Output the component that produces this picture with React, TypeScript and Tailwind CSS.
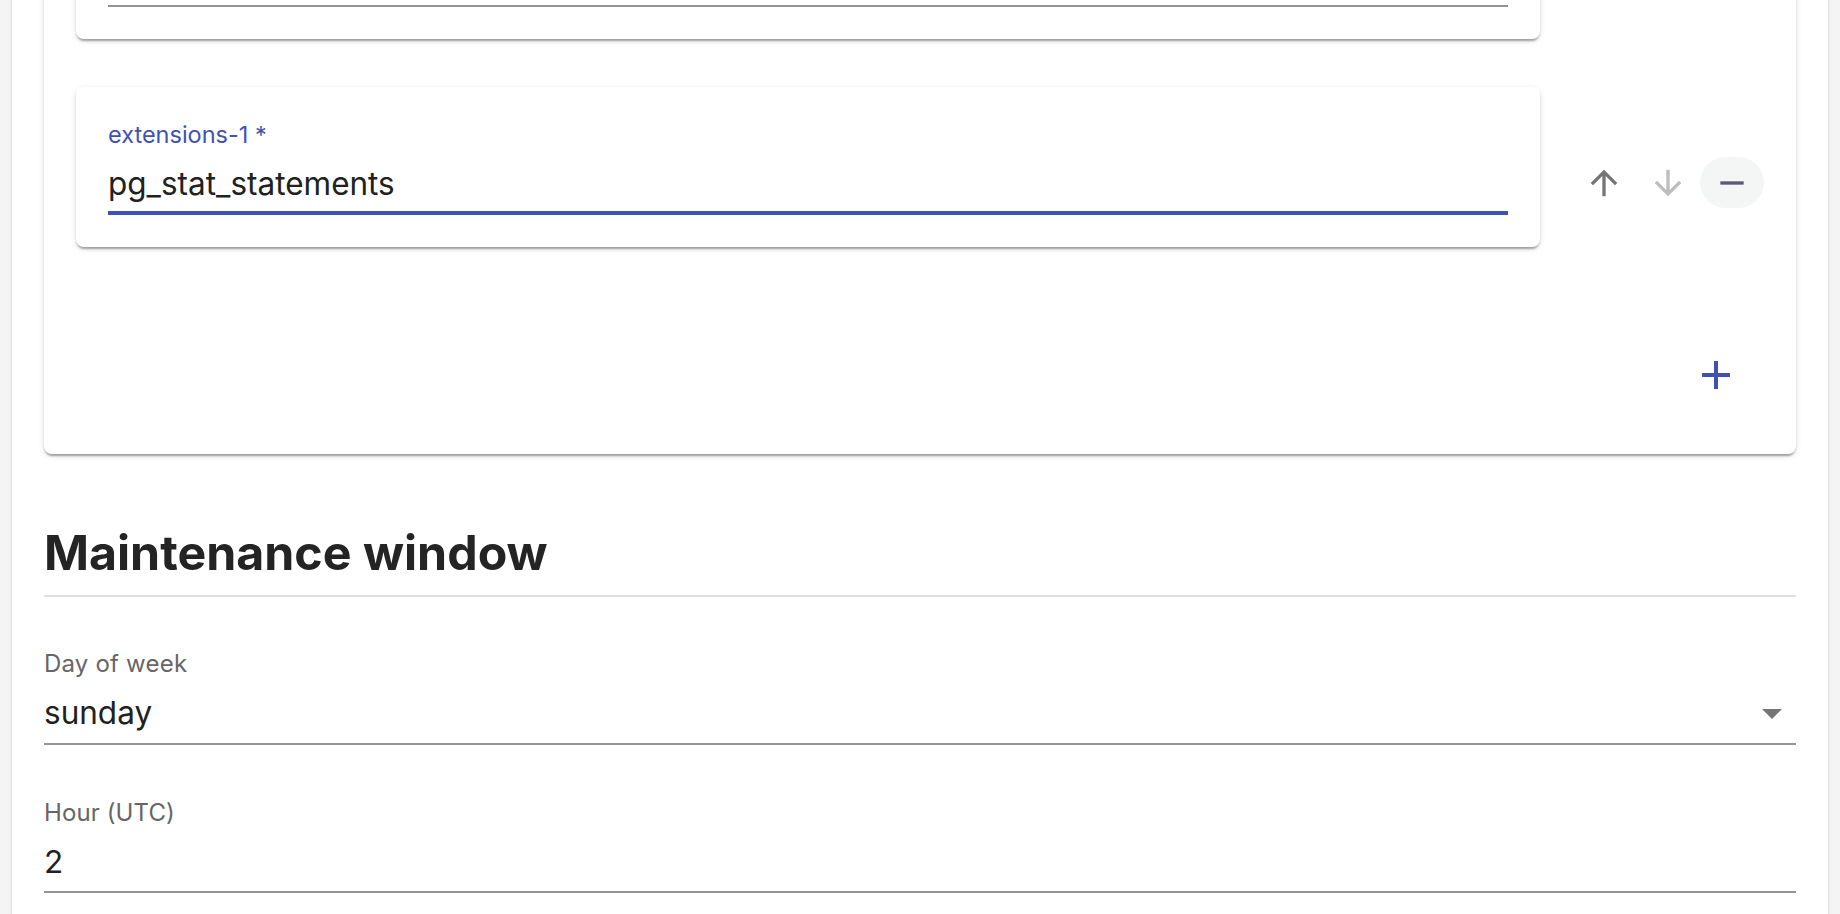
import React from "react";

const ArrowUp = ({ color }: { color: string }) => (
  <svg width="40" height="40" viewBox="0 0 24 24" fill={color}>
    <path d="M4 12l1.41 1.41L11 7.83V20h2V7.83l5.58 5.59L20 12l-8-8-8 8z" />
  </svg>
);

const ArrowDown = ({ color }: { color: string }) => (
  <svg width="40" height="40" viewBox="0 0 24 24" fill={color}>
    <path d="M20 12l-1.41-1.41L13 16.17V4h-2v12.17l-5.58-5.59L4 12l8 8 8-8z" />
  </svg>
);

const Minus = ({ color }: { color: string }) => (
  <svg width="40" height="40" viewBox="0 0 24 24" fill={color}>
    <path d="M19 13H5v-2h14v2z" />
  </svg>
);

const Plus = () => (
  <svg width="48" height="48" viewBox="0 0 24 24" fill="#3f51b5">
    <path d="M19 13h-6v6h-2v-6H5v-2h6V5h2v6h6v2z" />
  </svg>
);

const cardShadow =
  "shadow-[0_4px_2px_-2px_rgba(0,0,0,0.2),0_2px_2px_0_rgba(0,0,0,0.14),0_2px_6px_0_rgba(0,0,0,0.12)]";

function ItemRow({
  label,
  value,
  focused,
  upDisabled,
  downDisabled,
}: {
  label?: string;
  value?: string;
  focused: boolean;
  upDisabled: boolean;
  downDisabled: boolean;
}) {
  return (
    <div className="flex items-start gap-[32px]">
      <div
        className={`flex-1 bg-white rounded-lg px-[32px] pt-[36px] pb-[32px] ${cardShadow}`}
      >
        <div
          className={`h-[24px] text-[23.5px] leading-[24px] ${
            focused ? "text-[#3f51b5]" : "text-[#666666]"
          }`}
        >
          {label}
        </div>
        <div
          className={`mt-[18px] ${
            focused
              ? "pb-[8px] border-b-4 border-[#3f51b5]"
              : "pb-[10px] border-b-2 border-[#949494]"
          }`}
        >
          <div className="h-[38px] text-[31.5px] leading-[38px] text-[#212121]">{value}</div>
        </div>
      </div>
      <div className="mt-[70px] flex">
        <div className="w-[64px] h-[51px] flex items-center justify-center rounded-full">
          <ArrowUp color={upDisabled ? "#bdbdbd" : "#757575"} />
        </div>
        <div className="w-[64px] h-[51px] flex items-center justify-center rounded-full">
          <ArrowDown color={downDisabled ? "#bdbdbd" : "#757575"} />
        </div>
        <div
          className={`w-[64px] h-[51px] flex items-center justify-center rounded-full ${
            focused ? "bg-[#f4f5f5]" : ""
          }`}
        >
          <Minus color={focused ? "#575b77" : "#757575"} />
        </div>
      </div>
    </div>
  );
}

export default function App() {
  return (
    <div className="w-[1840px] h-[914px] overflow-hidden bg-[#f4f4f4] px-[12px] font-['Inter',sans-serif]">
      <div className="min-h-[1200px] bg-white px-[32px] pb-[200px] shadow-[0_0_3px_rgba(0,0,0,0.18)]">
        <div className={`-mt-[153px] bg-white rounded-lg px-[32px] pt-[32px] pb-[55px] ${cardShadow}`}>
          <div className="flex flex-col gap-[48px]">
            <ItemRow focused={false} upDisabled={true} downDisabled={false} />
            <ItemRow
              label="extensions-1 *"
              value="pg_stat_statements"
              focused={true}
              upDisabled={false}
              downDisabled={true}
            />
          </div>
          <div className="mt-[104px] flex justify-end pr-[24px]">
            <Plus />
          </div>
        </div>

        <h2 className="mt-[70px] text-[48.3px] leading-[58px] font-bold text-[#242424]">
          Maintenance window
        </h2>
        <div className="mt-[13px] h-[2px] bg-[#e0e0e0]" />

        <div className="mt-[55px] text-[24px] leading-[24px] tracking-[0.2px] text-[#666666]">
          Day of week
        </div>
        <div className="mt-[18px] pb-[11px] border-b-2 border-[#949494] flex items-start">
          <div className="flex-1 text-[31.5px] leading-[38px] text-[#212121]">sunday</div>
          <svg
            className="mt-[15px] mr-[14px]"
            width="20"
            height="10"
            viewBox="0 0 10 5"
            fill="#757575"
          >
            <path d="M0 0l5 5 5-5z" />
          </svg>
        </div>

        <div className="mt-[56px] text-[24px] leading-[24px] tracking-[0.1px] text-[#666666]">
          Hour (UTC)
        </div>
        <div className="mt-[18px] pb-[10px] border-b-2 border-[#949494]">
          <div className="text-[31.5px] leading-[38px] text-[#212121]">2</div>
        </div>
      </div>
    </div>
  );
}
